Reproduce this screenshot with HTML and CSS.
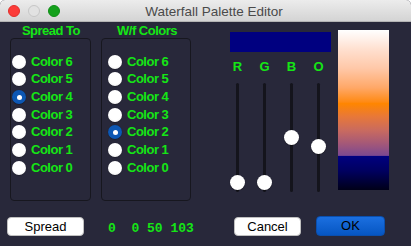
FILE: index.html
```html
<!DOCTYPE html>
<html>
<head>
<meta charset="utf-8">
<link rel="stylesheet" href="styles.css">
</head>
<body>
<div class="window">
  <div class="titlebar">
    <div class="lights">
      <span class="light red"></span>
      <span class="light gray"></span>
      <span class="light green"></span>
    </div>
    <div class="title">Waterfall Palette Editor</div>
  </div>
  <div class="content">
    <div class="toprow">
      <div class="group group-spread">
        <div class="group-label">Spread To</div>
        <div class="group-box">
          <div class="radio-row"><span class="radio"></span><span class="radio-text">Color 6</span></div>
          <div class="radio-row"><span class="radio"></span><span class="radio-text">Color 5</span></div>
          <div class="radio-row"><span class="radio selected"></span><span class="radio-text">Color 4</span></div>
          <div class="radio-row"><span class="radio"></span><span class="radio-text">Color 3</span></div>
          <div class="radio-row"><span class="radio"></span><span class="radio-text">Color 2</span></div>
          <div class="radio-row"><span class="radio"></span><span class="radio-text">Color 1</span></div>
          <div class="radio-row"><span class="radio"></span><span class="radio-text">Color 0</span></div>
        </div>
      </div>
      <div class="group group-wf">
        <div class="group-label">W/f Colors</div>
        <div class="group-box">
          <div class="radio-row"><span class="radio"></span><span class="radio-text">Color 6</span></div>
          <div class="radio-row"><span class="radio"></span><span class="radio-text">Color 5</span></div>
          <div class="radio-row"><span class="radio"></span><span class="radio-text">Color 4</span></div>
          <div class="radio-row"><span class="radio"></span><span class="radio-text">Color 3</span></div>
          <div class="radio-row"><span class="radio selected"></span><span class="radio-text">Color 2</span></div>
          <div class="radio-row"><span class="radio"></span><span class="radio-text">Color 1</span></div>
          <div class="radio-row"><span class="radio"></span><span class="radio-text">Color 0</span></div>
        </div>
      </div>
      <div class="sliders">
        <div class="swatch"></div>
        <div class="slider-labels">
          <span class="slider-label">R</span>
          <span class="slider-label">G</span>
          <span class="slider-label">B</span>
          <span class="slider-label">O</span>
        </div>
        <div class="slider-tracks">
          <div class="slider-col"><div class="track"><span class="knob" style="top:91.5px"></span></div></div>
          <div class="slider-col"><div class="track"><span class="knob" style="top:91.5px"></span></div></div>
          <div class="slider-col"><div class="track"><span class="knob" style="top:46.5px"></span></div></div>
          <div class="slider-col"><div class="track"><span class="knob" style="top:55.5px"></span></div></div>
        </div>
      </div>
      <div class="palette"></div>
    </div>
    <div class="bottomrow">
      <button class="btn btn-spread">Spread</button>
      <div class="values">0  0 50 103</div>
      <button class="btn btn-cancel">Cancel</button>
      <button class="btn btn-ok">OK</button>
    </div>
  </div>
</div>
</body>
</html>
```
FILE: styles.css
```css
html, body {
  margin: 0;
  padding: 0;
  background: #ffffff;
}
body {
  width: 411px;
  height: 246px;
  overflow: hidden;
  font-family: "Liberation Sans", Arial, sans-serif;
}
.window {
  width: 411px;
  height: 246px;
  border-radius: 5px 5px 0 0;
  overflow: hidden;
  background: #28283a;
  display: flex;
  flex-direction: column;
}
.titlebar {
  height: 22px;
  flex: none;
  background: linear-gradient(#ececec, #d4d4d4);
  border-bottom: 1px solid #b4b4b4;
  box-sizing: border-box;
  display: flex;
  align-items: center;
}
.lights {
  display: flex;
  gap: 8px;
  padding-left: 8px;
  width: 60px;
  box-sizing: border-box;
  flex: none;
}
.light {
  width: 12px;
  height: 12px;
  border-radius: 50%;
  box-sizing: border-box;
}
.light.red { background: #fc3c39; border: 1px solid #e0302c; }
.light.gray { background: #e2e2e2; border: 1px solid #c6c6c6; }
.light.green { background: #14a11c; border: 1px solid #0f8e16; }
.title {
  flex: 1;
  text-align: center;
  font-size: 13.5px;
  color: #4a4a4a;
  padding-right: 43px;
  padding-top: 1px;
}
.content {
  flex: 1;
  display: flex;
  flex-direction: column;
}
.toprow {
  display: flex;
  padding: 2px 0 0 10px;
  align-items: flex-start;
}
.group {
  display: flex;
  flex-direction: column;
}
.group-spread { width: 81px; margin-right: 10px; }
.group-wf { width: 90px; }
.group-label {
  height: 14px;
  line-height: 14px;
  text-align: center;
  font-size: 13px;
  font-weight: bold;
  letter-spacing: -0.5px;
  color: #15e615;
}
.group-spread .group-label { padding-left: 1px; }
.group-wf .group-label { padding-left: 2px; }
.group-box {
  height: 163px;
  box-sizing: border-box;
  border: 1px solid #17171f;
  border-radius: 4px;
  padding-top: 14px;
}
.group-spread .group-box { padding-left: 1px; }
.group-wf .group-box { padding-left: 6px; }
.radio-row {
  height: 17.67px;
  display: flex;
  align-items: center;
  gap: 5px;
}
.radio {
  width: 14px;
  height: 14px;
  border-radius: 50%;
  background: radial-gradient(circle at 50% 40%, #ffffff 55%, #e6e6e6 100%);
  box-shadow: 0 0.5px 1px rgba(0,0,0,0.5);
  flex: none;
  position: relative;
  box-sizing: border-box;
}
.radio.selected {
  background: #0d57b3;
}
.radio.selected::after {
  content: "";
  position: absolute;
  left: 4.5px;
  top: 4.5px;
  width: 5px;
  height: 5px;
  border-radius: 50%;
  background: #ffffff;
}
.radio-text {
  font-size: 13px;
  font-weight: bold;
  letter-spacing: -0.5px;
  color: #15e615;
  line-height: 14px;
}
.sliders {
  margin-left: 33px;
  width: 108px;
  display: flex;
  flex-direction: column;
}
.swatch {
  margin: 8px 0 0 6px;
  width: 101px;
  height: 20px;
  background: #000080;
}
.slider-labels, .slider-tracks {
  display: flex;
}
.slider-labels {
  margin-top: 7px;
  height: 16px;
  line-height: 16px;
}
.slider-label {
  width: 27px;
  text-align: center;
  font-size: 13px;
  font-weight: bold;
  color: #15e615;
}
.slider-tracks {
  margin-top: 8px;
  height: 109px;
}
.slider-col {
  width: 27px;
  display: flex;
  justify-content: center;
}
.track {
  width: 3px;
  height: 109px;
  background: #14141c;
  border-radius: 2px;
  position: relative;
}
.knob {
  position: absolute;
  left: -6px;
  width: 15px;
  height: 15px;
  border-radius: 50%;
  background: #ffffff;
  box-shadow: 0 0.5px 1px rgba(0,0,0,0.5);
}
.palette {
  margin: 6px 0 0 6px;
  width: 51px;
  height: 160px;
  background: linear-gradient(to bottom,
    #ffffff 0%,
    #ffe0d0 12%,
    #ffc8a8 24%,
    #ffa868 36%,
    #ff8a14 45%,
    #ff8600 46%,
    #e87838 54%,
    #c86a60 63%,
    #a45878 71%,
    #7c4890 78.4%,
    #000080 78.8%,
    #000060 88%,
    #000018 100%);
}
.bottomrow {
  display: flex;
  align-items: flex-start;
  margin-top: 15px;
  padding-left: 7px;
}
.btn {
  font-family: "Liberation Sans", Arial, sans-serif;
  font-size: 13px;
  color: #000000;
  border-radius: 4px;
  padding: 0;
  margin: 0;
  box-sizing: border-box;
  line-height: 17px;
  text-align: center;
}
.btn-spread, .btn-cancel {
  margin-top: 1px;
  height: 19px;
  background: #ffffff;
  border: 1px solid #c0c0c0;
}
.btn-spread { width: 77px; }
.btn-cancel { width: 67px; }
.btn-ok {
  margin-left: 15px;
  width: 69px;
  height: 20px;
  line-height: 18px;
  background: linear-gradient(#1b6fe0, #0656c2);
  border: 1px solid #0a4fae;
}
.values {
  margin-left: 24px;
  width: 126px;
  white-space: pre;
  font-family: "Liberation Mono", "Courier New", monospace;
  font-weight: bold;
  font-size: 13px;
  color: #15e615;
  line-height: 20px;
  padding-top: 3px;
}
```
